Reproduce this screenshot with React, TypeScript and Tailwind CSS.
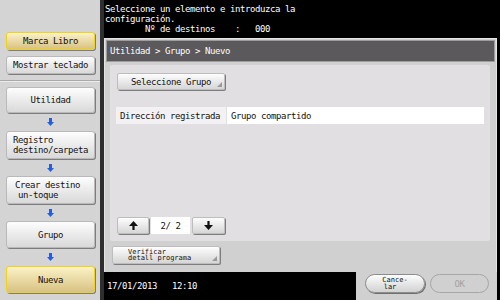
import React from 'react';

const FONT = "font-['DejaVu_Sans_Mono',monospace] text-[9px] tracking-[-0.42px] leading-[10px]";

function BlueArrow() {
  return (
    <div className="flex flex-1 items-center justify-center">
      <svg width="7" height="8" viewBox="0 0 7 8">
        <path d="M2 0h3v4h2L3.5 8 0 4h2z" fill="#1f5fe6" />
      </svg>
    </div>
  );
}

function SideButton({
  children, h, yellow, align = 'center',
}: {
  children: React.ReactNode; h: string; yellow?: boolean; align?: 'center' | 'left';
}) {
  const skin = yellow
    ? 'border-[#f0d21c] from-[#fbf2c6] to-[#d8c283] border-[1.5px]'
    : 'border-[#b9b9b9] from-[#fdfdfd] to-[#d9d9d9] border';
  return (
    <div
      className={`${h} ml-[6px] w-[89px] rounded-[3px] bg-linear-to-b ${skin} shadow-[1px_1px_0_#7d7d7d] flex ${
        align === 'center' ? 'items-center justify-center text-center' : 'flex-col justify-center pl-[6px]'
      } text-[#111] whitespace-pre`}
    >
      {children}
    </div>
  );
}

function Corner() {
  return (
    <span className="absolute right-[2px] bottom-[2px] w-0 h-0 border-l-[5px] border-l-transparent border-b-[5px] border-b-[#9a9a9a]" />
  );
}

function PagerArrow({ up }: { up?: boolean }) {
  return (
    <svg width="9" height="9" viewBox="0 0 9 9" className={up ? '' : 'rotate-180'}>
      <path d="M4.5 0L9 5H5.6V9H3.4V5H0z" fill="#111" />
    </svg>
  );
}

export default function App() {
  return (
    <div className={`w-[500px] h-[300px] flex overflow-hidden bg-black ${FONT}`}>
      {/* Sidebar */}
      <div className="w-[100px] h-full bg-[#d4d4d4] flex flex-col">
        <div className="h-[32px]" />
        <SideButton h="h-[18px]" yellow>Marca Libro</SideButton>
        <div className="h-[6px]" />
        <SideButton h="h-[18px]">Mostrar teclado</SideButton>
        <div className="h-[6px]" />
        <div className="h-px bg-[#a9a9a9]" />
        <div className="h-px bg-[#ececec]" />
        <div className="h-[5px]" />
        <SideButton h="h-[26px]">Utilidad</SideButton>
        <div className="h-[18px] flex"><BlueArrow /></div>
        <SideButton h="h-[28px]" align="left">
          <span>Registro</span>
          <span>destino/carpeta</span>
        </SideButton>
        <div className="h-[17px] flex"><BlueArrow /></div>
        <SideButton h="h-[28px]" align="left">
          <span className="pl-[2px]">Crear destino</span>
          <span className="pl-[5px]">un-toque</span>
        </SideButton>
        <div className="h-[17px] flex"><BlueArrow /></div>
        <SideButton h="h-[27px]">Grupo</SideButton>
        <div className="h-[18px] flex"><BlueArrow /></div>
        <SideButton h="h-[27px]" yellow>Nueva</SideButton>
      </div>
      <div className="w-[4px] h-full bg-[#2e2e2e]" />

      {/* Right column */}
      <div className="flex-1 h-full flex flex-col bg-black">
        <div className="h-[38px] pl-[1px] pt-[4px] text-white whitespace-pre">
          {'Seleccione un elemento e introduzca la\nconfiguración.\n        Nº de destinos    :   000'}
        </div>

        <div className="flex-1 mr-[3px] flex flex-col bg-[#d0d0d0]">
          <div className="flex-1 flex flex-col border-l border-t border-r border-[#e4e4e4]">
            <div className="mt-[1px] mx-[1px] h-[22px] bg-[#5b595b] border border-[#9d9d9d] flex items-center pl-[3px] text-white">
              Utilidad &gt; Grupo &gt; Nuevo
            </div>

            <div className="mt-[3px] ml-[5px] mr-[6px] flex-1 bg-[#e1dfe1] rounded-[2px] flex flex-col px-[6px] pt-[8px] pb-[7px]">
              <div className="relative ml-px w-[108px] h-[17px] rounded-[2px] border border-[#bdbdbd] bg-linear-to-b from-[#fdfdfd] to-[#d6d6d6] shadow-[1px_1px_0_#7d7d7d] flex items-center justify-center text-[#111]">
                Seleccione Grupo
                <Corner />
              </div>

              <div className="mt-[17px] h-[17px] flex">
                <div className="w-[110px] bg-[#f3f1f3] flex items-center pl-[4px] text-[#111]">
                  Dirección registrada
                </div>
                <div className="flex-1 ml-px bg-white flex items-center pl-[4px] text-[#111]">
                  Grupo compartido
                </div>
              </div>

              <div className="flex-1" />

              <div className="flex items-stretch h-[17px] ml-px gap-[2px]">
                <div className="w-[32px] rounded-[2px] border border-[#bdbdbd] bg-linear-to-b from-[#fdfdfd] to-[#d6d6d6] shadow-[1px_1px_0_#7d7d7d] flex items-center justify-center">
                  <PagerArrow up />
                </div>
                <div className="w-[39px] bg-white flex items-center justify-center text-[#111] whitespace-pre">
                  {'2/ 2'}
                </div>
                <div className="w-[33px] rounded-[2px] border border-[#bdbdbd] bg-linear-to-b from-[#fdfdfd] to-[#d6d6d6] shadow-[1px_1px_0_#7d7d7d] flex items-center justify-center">
                  <PagerArrow />
                </div>
              </div>
            </div>

            <div className="relative mt-[5px] mb-[8px] ml-[7px] w-[108px] h-[18px] rounded-[2px] border border-[#bdbdbd] bg-linear-to-b from-[#fdfdfd] to-[#d6d6d6] shadow-[1px_1px_0_#7d7d7d] flex flex-col justify-center pl-[15px] text-[#111] text-[7px] leading-[6.5px] tracking-[0px]">
              <span>Verificar</span>
              <span>detall programa</span>
              <Corner />
            </div>
          </div>

          <div className="h-[28px] flex">
            <div className="w-[252px] bg-black flex items-center pl-[3px] text-white whitespace-pre">
              {'17/01/2013   12:10'}
            </div>
            <div className="flex-1 flex items-start pt-[2px] pl-[9px] gap-[5px]">
              <div className="w-[60px] h-[19px] rounded-full border border-[#8c8c8c] bg-linear-to-b from-[#fdfdfd] to-[#d2d2d2] shadow-[1px_1px_0_#6f6f6f] flex flex-col items-center justify-center text-[#111] text-[7px] leading-[6.5px] tracking-[0px]">
                <span>Cance-</span>
                <span className="-ml-[10px]">lar</span>
              </div>
              <div className="w-[59px] h-[19px] rounded-full border border-[#a6a6a6] bg-[#d0d0d0] flex items-center justify-center text-[#a3a3a3]">
                OK
              </div>
            </div>
          </div>
        </div>
      </div>
    </div>
  );
}
